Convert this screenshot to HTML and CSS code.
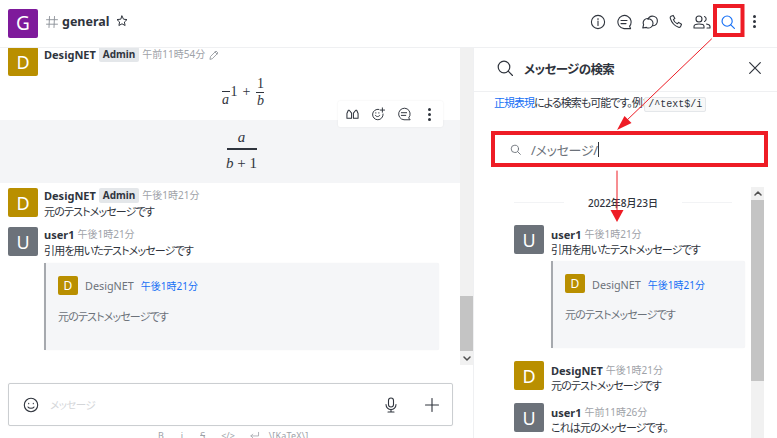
FILE: index.html
```html
<!DOCTYPE html>
<html lang="ja">
<head>
<meta charset="utf-8">
<title>general</title>
<link rel="stylesheet" href="styles.css">
</head>
<body>
<div class="app">
  <header class="topbar">
    <div class="avatar avatar-room purple">G</div>
    <svg class="hash" viewBox="0 0 12 12"><path d="M3.500 .5 3 11.500M8.500 .5 8 11.500M.5 3.700h11M.5 8.200h11"/></svg>
    <span class="room-name">general</span>
    <svg class="star" viewBox="0 0 12 12"><path d="M6 1l1.500 3.200 3.500.4-2.600 2.400.7 3.500L6 8.800l-3.100 1.700.7-3.500L1 4.600l3.500-.4z"/></svg>
    <nav class="tools">
      <span class="tool-cell"><svg class="tool" viewBox="0 0 16 16"><circle cx="8" cy="8" r="6.600"/><path d="M8 4.500v1M8 7v4.500"/></svg></span>
      <span class="tool-cell"><svg class="tool" viewBox="0 0 16 16"><path d="M13.600 12.200A6.600 6.600 0 1 0 8 14.600h6.600z"/><path d="M5 6.500h6M5 9.600h5"/></svg></span>
      <span class="tool-cell"><svg class="tool" viewBox="0 0 16 16"><path d="M6 5.500A4.800 4.800 0 1 1 11 11.800"/><path d="M7 4.800a4.300 4.300 0 0 0-5.400 5.800L.8 14l3.600-.6A4.400 4.400 0 0 0 11 9.500C11 7.600 9.300 5.500 7 4.800z"/></svg></span>
      <span class="tool-cell"><svg class="tool" viewBox="0 0 16 16"><path d="M3 2.200l2.200-.8 1.700 3-1.500 1.200c.6 1.800 2 3.300 3.900 4.200l1.300-1.400 2.900 1.800-.8 2.200c-.3.900-1.300 1.200-2.200.9C6.500 11.800 3.700 8.800 2.300 4.400 2 3.500 2.300 2.600 3 2.200z"/></svg></span>
      <span class="tool-cell"><svg class="tool tool-wide" viewBox="0 0 18 16"><circle cx="6" cy="5" r="3"/><path d="M1 14v-1.500C1 10.500 2.500 10 6 10s5 .5 5 2.500V14z"/><path d="M11.500 2.500a2.700 2.700 0 0 1 0 5M13.500 10c2 .3 3.500 1 3.500 2.500V14h-3"/></svg></span>
      <span class="tool-cell"><svg class="tool tool-active" viewBox="0 0 16 16"><circle cx="7" cy="7" r="5.800"/><path d="M11.200 11.200 15.300 15.300"/></svg></span>
      <span class="tool-cell"><span class="kebab"><i></i><i></i><i></i></span></span>
    </nav>
  </header>

  <main class="columns">
    <section class="room">
      <div class="room-body">
        <div class="timeline">
          <article class="msg msg-top">
            <div class="avatar gold">D</div>
            <div class="msg-body">
              <div class="msg-head">
                <b class="name">DesigNET</b><span class="badge">Admin</span><span class="time">午前11時54分</span>
                <svg class="pencil" viewBox="0 0 10 10"><path d="M1 9l.5-2.500L7 1l2 2-5.500 5.500zM6 2l2 2"/></svg>
              </div>
            </div>
          </article>
          <div class="math math-a">
            <span class="frac frac-empty"><span class="num"></span><span class="den"><i>a</i></span></span>
            <span class="math-txt one">1</span><span class="math-txt plus">+</span>
            <span class="frac"><span class="num">1</span><span class="den"><i>b</i></span></span>
          </div>
          <div class="math-band">
            <span class="frac frac-big"><span class="num"><i>a</i></span><span class="den"><i>b</i> + 1</span></span>
            <div class="actions">
              <span class="act-cell"><svg class="act act-quote" viewBox="0 0 14 10"><path d="M1 9.500V4.500L2.500 1h1L6 4v5.500zM8 9.500V4L10.500 1h1L13 4.500v5z"/></svg></span>
              <span class="act-cell"><svg class="act" viewBox="0 0 16 16"><path d="M9 2.700A6 6 0 1 0 13.800 8"/><path d="M5 9.500c.8 2 4.200 2 5 0M5.500 6.500v.5M9 6.500v.5M10.500 3.500h5M13 1v5"/></svg></span>
              <span class="act-cell"><svg class="act" viewBox="0 0 16 16"><path d="M13.600 12.200A6.600 6.600 0 1 0 8 14.600h6.600z"/><path d="M5 6.500h6M5 9.600h5"/></svg></span>
              <span class="act-cell act-cell-last"><span class="kebab"><i></i><i></i><i></i></span></span>
            </div>
          </div>
          <article class="msg msg-three">
            <div class="avatar gold">D</div>
            <div class="msg-body">
              <div class="msg-head"><b class="name">DesigNET</b><span class="badge">Admin</span><span class="time">午後1時21分</span></div>
              <p class="text">元のテストメッセージです</p>
            </div>
          </article>
          <article class="msg msg-four">
            <div class="avatar slate">U</div>
            <div class="msg-body">
              <div class="msg-head"><b class="name">user1</b><span class="time">午後1時21分</span></div>
              <p class="text">引用を用いたテストメッセージです</p>
              <blockquote class="quote">
                <div class="quote-head"><div class="avatar avatar-sm gold">D</div><span class="quote-name">DesigNET</span><span class="quote-time">午後1時21分</span></div>
                <p class="quote-text">元のテストメッセージです</p>
              </blockquote>
            </div>
          </article>
        </div>
        <div class="scrollbar scrollbar-room">
          <div class="sb-track"><div class="sb-thumb"></div></div>
          <div class="sb-btn"><svg viewBox="0 0 8 5"><path d="M1 1l3 3 3-3"/></svg></div>
        </div>
      </div>
      <div class="composer">
        <svg class="cmp-emoji" viewBox="0 0 16 16"><circle cx="8" cy="8" r="6.700"/><path d="M5 10c1 1.700 5 1.700 6 0M5.700 6.200v.6M10.300 6.200v.6"/></svg>
        <span class="placeholder">メッセージ</span>
        <svg class="cmp-mic" viewBox="0 0 16 16"><rect x="5.500" y="1" width="5" height="9" rx="2.500"/><path d="M3 7.500a5 5 0 0 0 10 0M8 12.500v2.500M5 15h6"/></svg>
        <svg class="cmp-plus" viewBox="0 0 14 14"><path d="M7 .5v13M.5 7h13"/></svg>
      </div>
      <div class="format">
        <b>B</b><i>i</i><s>S</s><span>&lt;/&gt;</span>
        <svg class="fmt-return" viewBox="0 0 12 10"><path d="M10.500 1.500v4H2M4 3.500l-2 2 2 2"/></svg>
        <span>\[KaTeX\]</span>
      </div>
    </section>

    <aside class="panel">
      <div class="panel-head">
        <svg class="panel-search" viewBox="0 0 16 16"><circle cx="7" cy="7" r="5.800"/><path d="M11.200 11.200 15.500 15.500"/></svg>
        <h2 class="panel-title">メッセージの検索</h2>
        <svg class="panel-close" viewBox="0 0 12 12"><path d="M.7.700l10.600 10.600M11.300.7.700 11.300"/></svg>
      </div>
      <p class="hint"><a class="link">正規表現</a>による検索も可能です。例：<code>/^text$/i</code></p>
      <div class="search-field">
        <svg class="search-ico" viewBox="0 0 12 12"><circle cx="5.300" cy="5.300" r="4"/><path d="M8.300 8.300l3 3"/></svg>
        <span class="search-value">/メッセージ/</span><span class="caret"></span>
      </div>
      <div class="results">
        <div class="result-list">
          <div class="date-line"><span>2022年8月23日</span></div>
          <article class="msg">
            <div class="avatar slate">U</div>
            <div class="msg-body">
              <div class="msg-head"><b class="name">user1</b><span class="time">午後1時21分</span></div>
              <p class="text">引用を用いたテストメッセージです</p>
              <blockquote class="quote quote-panel">
                <div class="quote-head"><div class="avatar avatar-sm gold">D</div><span class="quote-name">DesigNET</span><span class="quote-time">午後1時21分</span></div>
                <p class="quote-text">元のテストメッセージです</p>
              </blockquote>
            </div>
          </article>
          <article class="msg msg-r2">
            <div class="avatar gold">D</div>
            <div class="msg-body">
              <div class="msg-head"><b class="name">DesigNET</b><span class="time">午後1時21分</span></div>
              <p class="text">元のテストメッセージです</p>
            </div>
          </article>
          <article class="msg msg-r3">
            <div class="avatar slate">U</div>
            <div class="msg-body">
              <div class="msg-head"><b class="name">user1</b><span class="time">午前11時26分</span></div>
              <p class="text">これは元のメッセージです。</p>
            </div>
          </article>
        </div>
        <div class="scrollbar scrollbar-panel">
          <div class="sb-btn"><svg viewBox="0 0 8 5"><path d="M1 4l3-3 3 3"/></svg></div>
          <div class="sb-thumb"></div>
          <div class="sb-rest"></div>
        </div>
      </div>
    </aside>
  </main>

  <svg class="marks" viewBox="0 0 777 438">
    <rect class="mark-box" x="715" y="6" width="27.500" height="29"/>
    <rect class="mark-box" x="493" y="133" width="273" height="32"/>
    <path class="mark-line" d="M711.500 39 625 122"/>
    <path class="mark-head" d="M617 130l7.500-14 7 7z"/>
    <path class="mark-line mark-line-v" d="M617 171v40"/>
    <path class="mark-head" d="M610.500 210h13L617 222z"/>
  </svg>
</div>
</body>
</html>
```
FILE: styles.css
```css
* { box-sizing: border-box; }
html, body { margin: 0; height: 100%; overflow: hidden; background: #fff; }
body { font-family: "Noto Sans", "Noto Sans CJK JP", sans-serif; font-size: 12px; color: #2f343d; font-feature-settings: "palt"; }
svg { fill: none; stroke-linecap: round; stroke-linejoin: round; flex: none; }
p, h2, blockquote { margin: 0; }

.app { position: relative; width: 777px; height: 438px; display: flex; flex-direction: column; overflow: hidden; }

/* top bar */
.topbar { height: 48px; flex: none; display: flex; align-items: center; padding: 0 10px 4px 8px; border-bottom: 1px solid #eff0f2; }
.avatar { width: 30px; height: 29px; flex: none; border-radius: 2px; display: flex; align-items: center; justify-content: center; color: #fff; font-size: 18px; line-height: 1; }
.avatar-room { margin-top: 3px; font-size: 19px; }
.purple { background: #7e1a9b; }
.gold { background: #b98f00; }
.slate { background: #6c727a; }
.hash { width: 12px; height: 12px; margin-left: 8px; stroke: #8a8f96; stroke-width: .9; }
.room-name { margin-left: 4px; font-size: 12.500px; font-weight: 700; color: #2f343d; }
.star { width: 12px; height: 12px; margin: -2px 0 0 6px; stroke: #2f343d; stroke-width: 1; }
.tools { margin-left: auto; display: flex; align-items: center; }
.tool-cell { width: 26px; display: flex; align-items: center; justify-content: center; }
.tool { width: 16px; height: 16px; stroke: #2f343d; stroke-width: 1.100; }
.tool-wide { width: 18px; }
.tool-active { stroke: #156ff5; stroke-width: 1.300; width: 14px; height: 14px; }
.kebab { display: flex; flex-direction: column; gap: 2px; width: 3px; }
.kebab i { width: 3px; height: 3px; border-radius: 50%; background: #2f343d; }

/* columns */
.columns { flex: 1; min-height: 0; display: flex; }
.room { width: 474px; flex: none; display: flex; flex-direction: column; border-right: 1px solid #eff0f2; }
.room-body { height: 317px; flex: none; display: flex; overflow: hidden; }
.timeline { flex: 1; min-width: 0; }
.scrollbar { width: 13px; flex: none; display: flex; flex-direction: column; }
.sb-track { flex: 1; background: #f1f1f1; display: flex; flex-direction: column; justify-content: flex-end; }
.sb-thumb { background: #c4c4c4; }
.sb-track .sb-thumb { height: 55px; }
.sb-btn { height: 14px; background: #f1f1f1; display: flex; align-items: center; justify-content: center; }
.sb-btn svg { width: 8px; height: 5px; stroke: #505050; stroke-width: 1.500; }

/* message */
.msg { display: flex; padding: 0 8px; gap: 6px; }
.msg-top { margin-top: -1px; }
.msg-body { flex: 1; min-width: 0; }
.msg-head { display: flex; align-items: center; height: 15px; }
.name { font-size: 11px; font-weight: 700; color: #2f343d; line-height: 15px; }
.badge { margin-left: 3px; background: #e4e7ea; border-radius: 2px; font-size: 10px; font-weight: 700; color: #2f343d; padding: 0 4px; height: 15px; line-height: 14px; margin-top: -1px; }
.time { margin-left: 3px; font-size: 10px; color: #9ea2a8; line-height: 15px; }
.pencil { width: 10px; height: 10px; margin-left: 4px; stroke: #8a8f96; stroke-width: .8; }
.text { font-size: 11px; letter-spacing: -.85px; line-height: 17px; color: #2f343d; }

/* math */
.math { font-family: "Liberation Serif", serif; color: #2f343d; display: flex; align-items: center; justify-content: center; }
.math-a { height: 46px; margin-top: -2px; padding: 0 0 10px 26px; }
.frac { display: inline-flex; flex-direction: column; align-items: center; min-width: 8px; font-family: "Liberation Serif", serif; font-size: 14px; line-height: 14px; }
.frac .num { display: block; border-bottom: 1px solid #2f343d; width: 100%; text-align: center; min-height: 15px; padding-bottom: 1px; }
.frac .den { display: block; padding-top: 1px; height: 15px; }
.math-txt { font-size: 14px; line-height: 1; }
.one { margin: -1px 0 0 1px; }
.plus { margin: -1px 6px 0 5px; }
.math-band { position: relative; height: 63px; background: #f4f5f7; display: flex; align-items: center; justify-content: center; padding-bottom: 2px; }
.frac-big { font-size: 15px; width: 30px; margin-left: 23px; }
.frac-big .num { border-bottom: 2px solid #2f343d; min-height: 20px; padding-bottom: 3px; line-height: 15px; }
.frac-big .den { padding-top: 6px; height: 21px; line-height: 15px; white-space: nowrap; }
.actions { position: absolute; left: 338px; top: -19px; width: 105px; height: 26px; background: #fff; border-radius: 2px; box-shadow: 0 0 2px rgba(0,0,0,.08); display: flex; align-items: center; padding-left: 1px; }
.act-cell { width: 26px; display: flex; justify-content: center; align-items: center; }
.act-cell-last { width: 24px; }
.act { width: 14px; height: 14px; stroke: #2f343d; stroke-width: 1.100; }
.act-quote { width: 13px; height: 10px; }
.msg-three { margin-top: 5px; }
.msg-four { margin-top: 7px; }

/* quote */
.quote { margin-top: 4px; width: 395px; height: 87px; background: #f5f6f8; border-left: 2px solid #a6a9ae; border-radius: 0 2px 2px 0; padding: 13px 12px; box-shadow: 0 0 1px rgba(0,0,0,.08); }
.quote-head { display: flex; align-items: center; }
.avatar-sm { width: 20px; height: 19px; font-size: 12px; }
.quote-name { margin-left: 7px; font-size: 10.800px; color: #6c727a; }
.quote-time { margin-left: 7px; font-size: 10px; color: #156ff5; }
.quote-text { margin-top: 14px; font-size: 11px; letter-spacing: -.85px; line-height: 16px; color: #6c727a; }

/* composer */
.composer { margin: 18px 0 0 8px; width: 445px; height: 43px; flex: none; border: 1px solid #cbced1; border-radius: 2px; display: flex; align-items: center; padding: 0 13px 0 14px; box-shadow: 0 0 1px rgba(0,0,0,.1); }
.cmp-emoji { width: 16px; height: 16px; stroke: #2f343d; stroke-width: 1.100; }
.placeholder { margin-left: 11px; font-size: 10.500px; letter-spacing: -.5px; color: #d4d6d9; }
.cmp-mic { width: 16px; height: 16px; margin-left: auto; stroke: #2f343d; stroke-width: 1.100; }
.cmp-plus { width: 14px; height: 14px; margin-left: 26px; stroke: #2f343d; stroke-width: 1.100; }
.format { flex: none; margin-top: 3px; padding-left: 158px; display: flex; align-items: center; height: 12px; font-size: 9px; color: #9ea2a8; gap: 16px; }
.format b { font-weight: 400; }
.format i { font-style: normal; margin-left: 1px; }
.format s { margin-left: 1px; }
.format span:last-child { margin-left: -7px; letter-spacing: .02em; }
.fmt-return { width: 11px; height: 9px; stroke: #9ea2a8; stroke-width: .9; margin-left: -2px; }

/* search panel */
.panel { flex: 1; min-width: 0; display: flex; flex-direction: column; }
.panel-head { height: 44px; flex: none; display: flex; align-items: center; padding: 0 16px 4px 23px; border-bottom: 1px solid #eff0f2; }
.panel-search { width: 16px; height: 16px; stroke: #2f343d; stroke-width: 1.200; }
.panel-title { margin: 2px 0 0 11px; font-size: 12.500px; letter-spacing: -.6px; font-weight: 700; color: #2f343d; }
.panel-close { width: 12px; height: 12px; margin-left: auto; stroke: #2f343d; stroke-width: 1.200; }
.hint { flex: none; height: 39px; padding: 3px 0 0 20px; font-size: 11px; letter-spacing: -1px; line-height: 15px; color: #2f343d; white-space: nowrap; }
.link { color: #156ff5; }
code { font-family: "Liberation Mono", monospace; font-size: 10px; letter-spacing: 0; font-weight: 400; background: #f8f8f8; border: 1px solid #e4e7ea; border-radius: 2px; padding: 1px 3px; margin-left: -2px; }
.search-field { flex: none; margin: 0 0 0 20px; width: 275px; height: 36px; padding-left: 16px; display: flex; align-items: center; }
.search-ico { width: 11px; height: 11px; stroke: #6c727a; stroke-width: 1; }
.search-value { margin-left: 10px; font-size: 13px; letter-spacing: -.3px; color: #6c727a; }
.caret { width: 1px; height: 15px; background: #2f343d; }
.results { flex: 1; min-height: 0; display: flex; padding-top: 20px; overflow: hidden; }
.result-list { width: 277px; flex: none; }
.result-list .msg { padding: 0 0 0 40px; gap: 7px; }
.result-list .msg-head { margin-top: 2px; }
.date-line { margin: 0 19px 0 40px; height: 38px; display: flex; align-items: flex-start; justify-content: center; position: relative; }
.date-line span { position: relative; font-size: 10px; font-weight: 500; color: #2f343d; line-height: 32px; height: 32px; background: #fff; padding: 0 24px; }
.date-line::before { content: ""; position: absolute; left: 0; right: 0; top: 15px; border-top: 1px solid #f2f3f5; }
.result-list .text { line-height: 16px; }
.quote-panel { width: 194px; padding: 14px 12px; margin-top: 3px; }
.quote-panel .avatar-sm { margin-top: -1px; }
.msg-r2 { margin-top: 13px; }
.msg-r3 { margin-top: 9px; }
.scrollbar-panel .sb-btn { height: 13px; }
.scrollbar-panel .sb-thumb { height: 181px; }
.sb-rest { flex: 1; background: #f1f1f1; }

/* annotations drawn over the screenshot */
.marks { position: absolute; inset: 0; width: 777px; height: 438px; pointer-events: none; }
.mark-box { fill: none; stroke: #ee1c25; stroke-width: 4; stroke-linejoin: miter; }
.mark-line { stroke: #ee1c25; stroke-width: 1; }
.mark-head { fill: #ee1c25; }
```
